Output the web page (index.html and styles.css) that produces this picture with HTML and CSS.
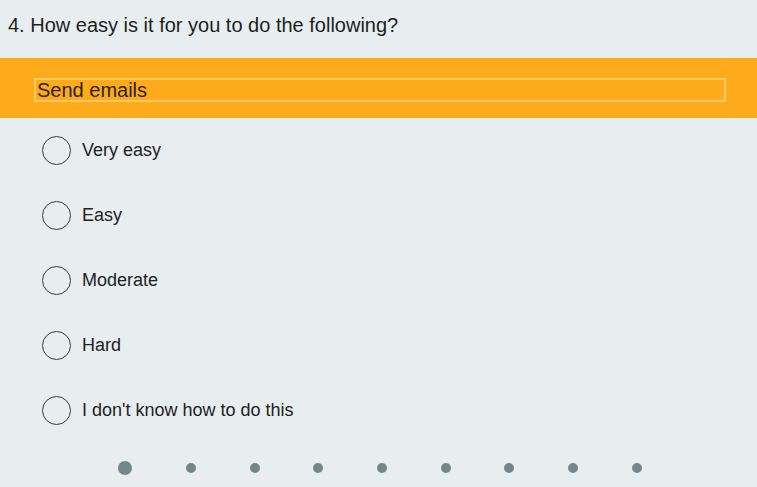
FILE: index.html
```html
<!DOCTYPE html>
<html>
<head>
<meta charset="utf-8">
<link rel="stylesheet" href="styles.css">
</head>
<body>
<div class="page">
  <div class="question">4. How easy is it for you to do the following?</div>
  <div class="band">
    <div class="item-box">Send emails</div>
  </div>
  <div class="options">
    <div class="option"><span class="radio"></span><span class="label">Very easy</span></div>
    <div class="option"><span class="radio"></span><span class="label">Easy</span></div>
    <div class="option"><span class="radio"></span><span class="label">Moderate</span></div>
    <div class="option"><span class="radio"></span><span class="label">Hard</span></div>
    <div class="option"><span class="radio"></span><span class="label">I don't know how to do this</span></div>
  </div>
  <div class="dots">
    <span class="slot slot-first"><span class="dot dot-active"></span></span>
    <span class="slot"><span class="dot"></span></span>
    <span class="slot"><span class="dot"></span></span>
    <span class="slot"><span class="dot"></span></span>
    <span class="slot"><span class="dot"></span></span>
    <span class="slot"><span class="dot"></span></span>
    <span class="slot"><span class="dot"></span></span>
    <span class="slot"><span class="dot"></span></span>
    <span class="slot"><span class="dot"></span></span>
  </div>
</div>
</body>
</html>
```
FILE: styles.css
```css
html, body {
  margin: 0;
  padding: 0;
  background: #e8eef0;
}
.page {
  width: 757px;
  height: 487px;
  overflow: hidden;
  font-family: "Liberation Sans", Arial, sans-serif;
  color: #1f1f1f;
}
.question {
  height: 58px;
  box-sizing: border-box;
  padding: 13px 0 0 8px;
  font-size: 20px;
  line-height: 24px;
  color: #1e1e1e;
}
.band {
  height: 60px;
  box-sizing: border-box;
  background: #fdab1a;
  padding: 20px 0 0 34px;
}
.item-box {
  width: 692px;
  height: 24px;
  box-sizing: border-box;
  border: 2px solid #fdc865;
  padding-left: 1px;
  font-size: 20px;
  line-height: 20px;
  color: #2d2310;
}
.options {
  display: flex;
  flex-direction: column;
}
.option {
  height: 65px;
  display: flex;
  align-items: center;
  padding-left: 42px;
}
.radio {
  width: 27px;
  height: 27px;
  border: 1px solid #3a3a3a;
  border-radius: 50%;
  flex: none;
}
.label {
  margin-left: 11px;
  font-size: 18px;
  color: #222;
}
.dots {
  display: flex;
  align-items: center;
  height: 50px;
  padding-left: 93px;
}
.slot {
  width: 63.7px;
  flex: none;
  display: flex;
  justify-content: center;
  align-items: center;
}
.slot-first {
  width: 64px;
  margin-right: 2px;
}
.dot {
  width: 10px;
  height: 10px;
  border-radius: 50%;
  background: #738789;
}
.dot-active {
  width: 14px;
  height: 14px;
}
```
